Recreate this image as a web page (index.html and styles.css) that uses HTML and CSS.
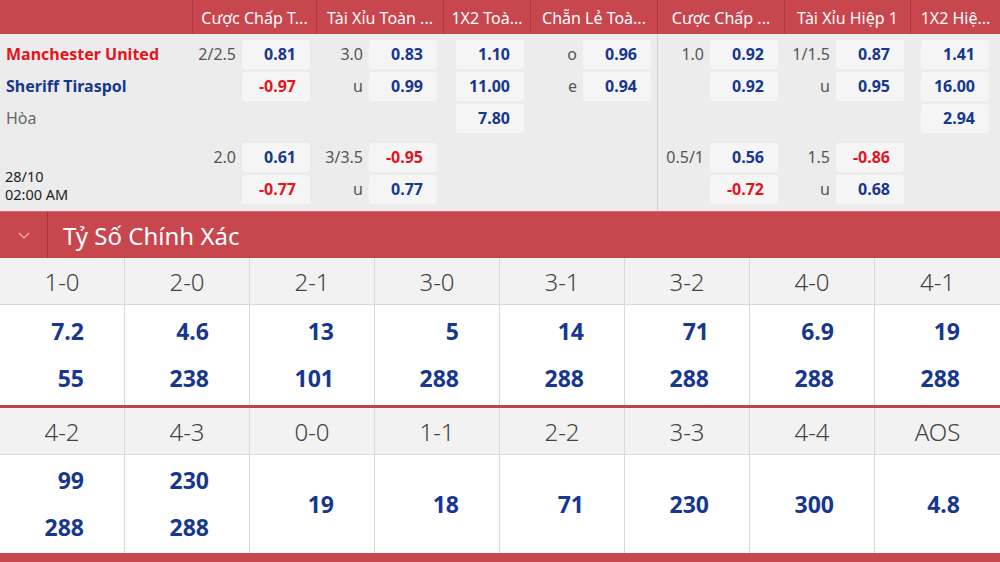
FILE: index.html
```html
<!DOCTYPE html>
<html lang="vi">
<head>
<meta charset="utf-8">
<title>Tỷ Số Chính Xác</title>
<link rel="stylesheet" href="styles.css">
</head>
<body>
<div class="odds">
  <div class="odds-head">
    <div class="h-blank"></div>
    <div class="h-cell w1">Cược Chấp T...</div>
    <div class="h-cell w2">Tài Xỉu Toàn ...</div>
    <div class="h-cell w3">1X2 Toà...</div>
    <div class="h-cell w4">Chẵn Lẻ Toà...</div>
    <div class="h-cell w5">Cược Chấp ...</div>
    <div class="h-cell w6">Tài Xỉu Hiệp 1</div>
    <div class="h-cell w7">1X2 Hiệ...</div>
  </div>
  <div class="odds-body">
    <div class="teams">
      <div class="grp g1">
        <div class="trow home">Manchester United</div>
        <div class="trow away">Sheriff Tiraspol</div>
        <div class="trow draw">Hòa</div>
      </div>
      <div class="grp g2 date">
        <div>28/10</div>
        <div>02:00 AM</div>
      </div>
    </div>

    <div class="mkt w1">
      <div class="grp g1">
        <div class="row"><span class="lbl">2/2.5</span><span class="box">0.81</span></div>
        <div class="row"><span class="box neg">-0.97</span></div>
        <div class="row"></div>
      </div>
      <div class="grp g2">
        <div class="row"><span class="lbl">2.0</span><span class="box">0.61</span></div>
        <div class="row"><span class="box neg">-0.77</span></div>
      </div>
    </div>

    <div class="mkt w2">
      <div class="grp g1">
        <div class="row"><span class="lbl">3.0</span><span class="box">0.83</span></div>
        <div class="row"><span class="lbl">u</span><span class="box">0.99</span></div>
        <div class="row"></div>
      </div>
      <div class="grp g2">
        <div class="row"><span class="lbl">3/3.5</span><span class="box neg">-0.95</span></div>
        <div class="row"><span class="lbl">u</span><span class="box">0.77</span></div>
      </div>
    </div>

    <div class="mkt w3">
      <div class="grp g1">
        <div class="row"><span class="box">1.10</span></div>
        <div class="row"><span class="box">11.00</span></div>
        <div class="row"><span class="box">7.80</span></div>
      </div>
      <div class="grp g2">
        <div class="row"></div>
        <div class="row"></div>
      </div>
    </div>

    <div class="mkt w4">
      <div class="grp g1">
        <div class="row"><span class="lbl">o</span><span class="box">0.96</span></div>
        <div class="row"><span class="lbl">e</span><span class="box">0.94</span></div>
        <div class="row"></div>
      </div>
      <div class="grp g2">
        <div class="row"></div>
        <div class="row"></div>
      </div>
    </div>

    <div class="mkt w5 half">
      <div class="grp g1">
        <div class="row"><span class="lbl">1.0</span><span class="box">0.92</span></div>
        <div class="row"><span class="box">0.92</span></div>
        <div class="row"></div>
      </div>
      <div class="grp g2">
        <div class="row"><span class="lbl">0.5/1</span><span class="box">0.56</span></div>
        <div class="row"><span class="box neg">-0.72</span></div>
      </div>
    </div>

    <div class="mkt w6">
      <div class="grp g1">
        <div class="row"><span class="lbl">1/1.5</span><span class="box">0.87</span></div>
        <div class="row"><span class="lbl">u</span><span class="box">0.95</span></div>
        <div class="row"></div>
      </div>
      <div class="grp g2">
        <div class="row"><span class="lbl">1.5</span><span class="box neg">-0.86</span></div>
        <div class="row"><span class="lbl">u</span><span class="box">0.68</span></div>
      </div>
    </div>

    <div class="mkt w7 last">
      <div class="grp g1">
        <div class="row"><span class="box">1.41</span></div>
        <div class="row"><span class="box">16.00</span></div>
        <div class="row"><span class="box">2.94</span></div>
      </div>
      <div class="grp g2">
        <div class="row"></div>
        <div class="row"></div>
      </div>
    </div>
  </div>
</div>

<div class="section-bar">
  <div class="toggle">
    <svg width="12" height="7" viewBox="0 0 12 7"><path d="M1 1 L6 6 L11 1" fill="none" stroke="#f3b9bd" stroke-width="1.2"/></svg>
  </div>
  <div class="section-title">Tỷ Số Chính Xác</div>
</div>

<div class="scores">
  <div class="sgrid first">
    <div class="sh">1-0</div><div class="sh">2-0</div><div class="sh">2-1</div><div class="sh">3-0</div>
    <div class="sh">3-1</div><div class="sh">3-2</div><div class="sh">4-0</div><div class="sh">4-1</div>
    <div class="sv"><span>7.2</span><span>55</span></div>
    <div class="sv"><span>4.6</span><span>238</span></div>
    <div class="sv"><span>13</span><span>101</span></div>
    <div class="sv"><span>5</span><span>288</span></div>
    <div class="sv"><span>14</span><span>288</span></div>
    <div class="sv"><span>71</span><span>288</span></div>
    <div class="sv"><span>6.9</span><span>288</span></div>
    <div class="sv"><span>19</span><span>288</span></div>
  </div>
  <div class="sgrid second">
    <div class="sh">4-2</div><div class="sh">4-3</div><div class="sh">0-0</div><div class="sh">1-1</div>
    <div class="sh">2-2</div><div class="sh">3-3</div><div class="sh">4-4</div><div class="sh">AOS</div>
    <div class="sv"><span>99</span><span>288</span></div>
    <div class="sv"><span>230</span><span>288</span></div>
    <div class="sv"><span>19</span></div>
    <div class="sv"><span>18</span></div>
    <div class="sv"><span>71</span></div>
    <div class="sv"><span>230</span></div>
    <div class="sv"><span>300</span></div>
    <div class="sv"><span>4.8</span></div>
  </div>
</div>
</body>
</html>
```

FILE: styles.css
```css
* { box-sizing: border-box; }
html, body { margin: 0; padding: 0; }
body {
  width: 1000px;
  height: 562px;
  overflow: hidden;
  background: #c8464e;
  font-family: "Noto Sans", "Open Sans", "DejaVu Sans", sans-serif;
}

/* ---------- odds table ---------- */
.odds { background: #ececec; }
.odds-head {
  display: flex;
  height: 34px;
  background: #c8464e;
  color: #fff;
  font-size: 16px;
}
.h-blank { width: 192px; }
.h-cell {
  border-left: 1px solid #b13941;
  display: flex;
  align-items: center;
  justify-content: center;
  white-space: nowrap;
  overflow: hidden;
  padding-top: 1px;
}
.w1 { width: 124px; }
.w2 { width: 127px; }
.w3 { width: 87px; }
.w4 { width: 127px; }
.w5 { width: 127px; }
.w6 { width: 126px; }
.w7 { width: 90px; }

.odds-body {
  display: flex;
  height: 177px;
}
.teams { width: 192px; }
.grp { display: flex; flex-direction: column; }
.g1 { padding-top: 6px; height: 103px; }
.g2 { height: 70px; padding-top: 6px; }

.trow {
  height: 32px;
  line-height: 29px;
  padding-left: 6px;
  font-size: 16px;
  white-space: nowrap;
}
.home { color: #e3141c; font-weight: 700; }
.away { color: #17378f; font-weight: 700; }
.draw { color: #666; }

.date {
  justify-content: flex-end;
  padding: 0 0 4px 5px;
  font-size: 14.5px;
  line-height: 18px;
  color: #222;
}

.mkt { padding-right: 6px; }
.mkt.half { border-left: 1px solid #cfcfcf; }
.mkt.last { padding-right: 11px; }
.row {
  height: 32px;
  display: flex;
  justify-content: flex-end;
  align-items: flex-start;
  gap: 6px;
}
.lbl {
  height: 29px;
  line-height: 29px;
  color: #555;
  font-size: 16px;
}
.box {
  width: 68px;
  height: 29px;
  line-height: 29px;
  background: #f5f5f5;
  border-radius: 3px;
  text-align: right;
  padding-right: 14px;
  font-weight: 700;
  font-size: 16px;
  color: #17378f;
}
.box.neg { color: #e3141c; }

/* ---------- section bar ---------- */
.section-bar {
  display: flex;
  height: 47px;
  background: #c8464e;
  border-top: 1px solid #d96b72;
}
.toggle {
  width: 48px;
  border-right: 1px solid #a8353c;
  display: flex;
  align-items: center;
  justify-content: center;
}
.section-title {
  color: #fff;
  font-size: 24px;
  padding-left: 15px;
  display: flex;
  align-items: center;
}

/* ---------- correct score grid ---------- */
.scores { background: #fff; }
.sgrid {
  display: grid;
  grid-template-columns: repeat(8, 125px);
}
.sgrid.first {
  grid-template-rows: 47px 100px;
  border-bottom: 3px solid #c0434a;
}
.sgrid.second {
  grid-template-rows: 47px 98px;
}
.sh {
  background: #f2f2f2;
  border-right: 1px solid #d8d8d8;
  border-bottom: 1px solid #d8d8d8;
  color: #444;
  font-size: 24px;
  font-weight: 300;
  display: flex;
  align-items: center;
  justify-content: center;
}
.sv {
  background: #fff;
  border-right: 1px solid #d8d8d8;
  display: flex;
  flex-direction: column;
  justify-content: center;
  align-items: flex-end;
  padding-right: 40px;
  gap: 18px;
  color: #17378f;
  font-weight: 700;
  font-size: 23px;
  line-height: 29px;
}
.sh:nth-child(8), .sv:nth-child(16) { border-right: none; }
```
